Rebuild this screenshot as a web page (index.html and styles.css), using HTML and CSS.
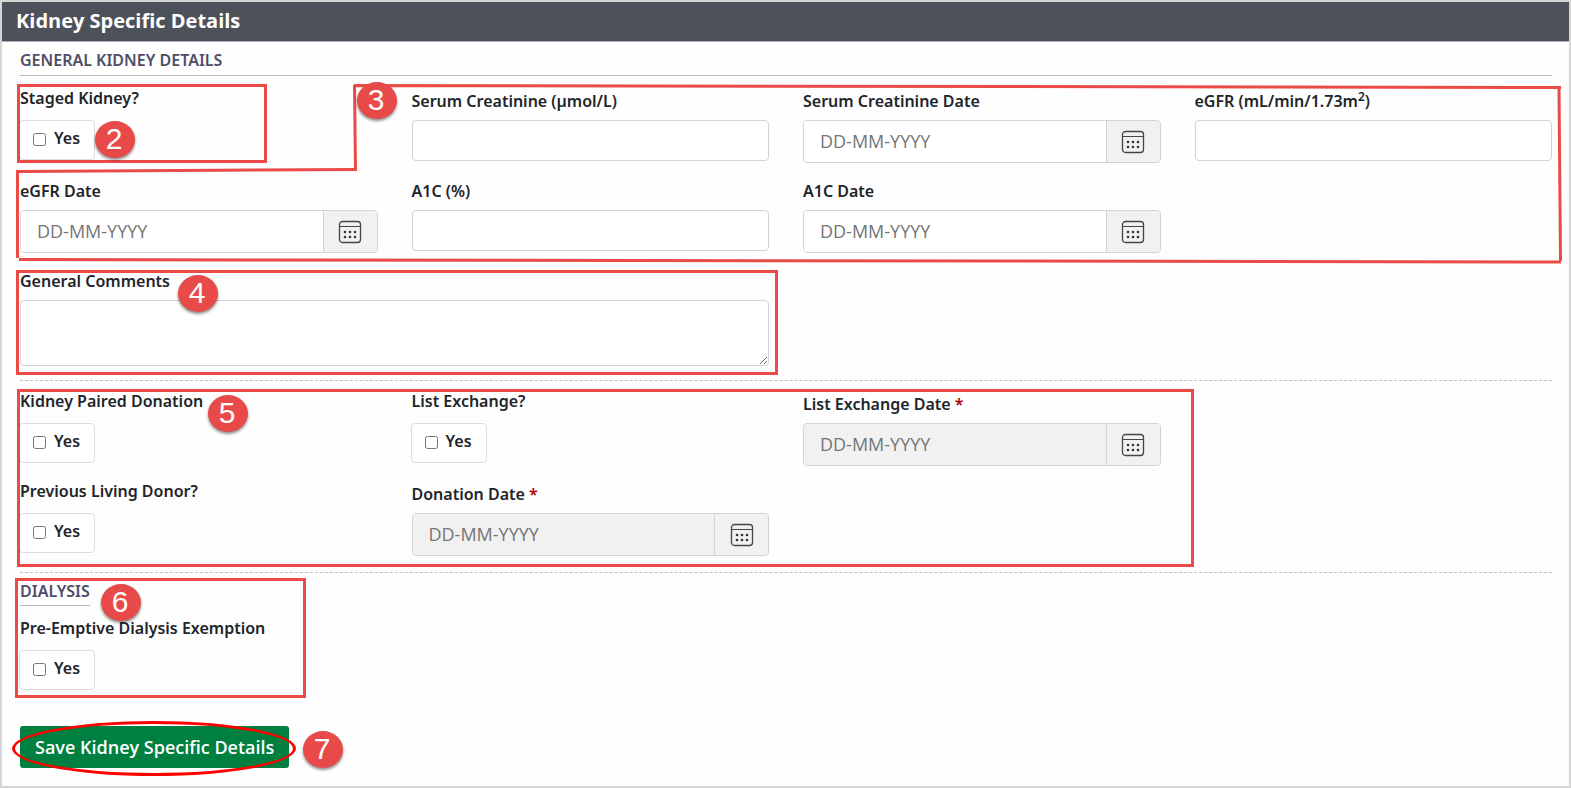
FILE: index.html
```html
<!DOCTYPE html>
<html lang="en">
<head>
<meta charset="utf-8">
<title>Kidney Specific Details</title>
<link rel="stylesheet" href="styles.css">
</head>
<body>
<svg class="sprite" aria-hidden="true">
  <symbol id="calendar" viewBox="0 0 24 24">
    <rect x="1.500" y="1.500" width="21" height="21" rx="3" fill="none" stroke="#444" stroke-width="1.300"/>
    <path d="M1.500 6.500h21" stroke="#444" stroke-width="1.200"/>
    <g fill="#333">
      <circle cx="7" cy="12" r="1.300"/><circle cx="12" cy="12" r="1.300"/><circle cx="17" cy="12" r="1.300"/>
      <circle cx="7" cy="17" r="1.300"/><circle cx="12" cy="17" r="1.300"/><circle cx="17" cy="17" r="1.300"/>
    </g>
  </symbol>
</svg>
<form class="panel">
  <h1 class="panel-title">Kidney Specific Details</h1>
  <div class="panel-body">
    <h2 class="section-title">General Kidney Details</h2>

    <section class="grid general">
      <div class="field check-field">
        <span class="label" id="staged-label">Staged Kidney?</span>
        <label class="check"><input type="checkbox" aria-describedby="staged-label">Yes</label>
        <span class="frame frame-2"></span>
        <span class="badge badge-2">2</span>
      </div>
      <div class="field">
        <label class="label" for="creatinine">Serum Creatinine (µmol/L)</label>
        <input class="text" id="creatinine" type="text">
      </div>
      <div class="field">
        <label class="label" for="creatinine-date">Serum Creatinine Date</label>
        <div class="date"><input id="creatinine-date" type="text" placeholder="DD-MM-YYYY"><button type="button" aria-label="Pick date"><svg class="icon"><use href="#calendar"/></svg></button></div>
      </div>
      <div class="field">
        <label class="label" for="egfr">eGFR (mL/min/1.73m<sup>2</sup>)</label>
        <input class="text" id="egfr" type="text">
      </div>
      <div class="field">
        <label class="label" for="egfr-date">eGFR Date</label>
        <div class="date"><input id="egfr-date" type="text" placeholder="DD-MM-YYYY"><button type="button" aria-label="Pick date"><svg class="icon"><use href="#calendar"/></svg></button></div>
      </div>
      <div class="field">
        <label class="label" for="a1c">A1C (%)</label>
        <input class="text" id="a1c" type="text">
      </div>
      <div class="field">
        <label class="label" for="a1c-date">A1C Date</label>
        <div class="date"><input id="a1c-date" type="text" placeholder="DD-MM-YYYY"><button type="button" aria-label="Pick date"><svg class="icon"><use href="#calendar"/></svg></button></div>
      </div>
      <svg class="outline" viewBox="0 0 1548 180" preserveAspectRatio="none" aria-hidden="true">
        <path d="M338 2.500 1545 4.500M1543 5 1544.500 178M1545 179 3 176.500M1.500 87V175M2 88.500 341 86.500M339.500 88 338.500 2"/>
      </svg>
      <span class="badge badge-3">3</span>
    </section>

    <section class="grid comments">
      <div class="field wide">
        <label class="label" for="comments">General Comments</label>
        <textarea id="comments"></textarea>
        <span class="frame frame-4"></span>
        <span class="badge badge-4">4</span>
      </div>
    </section>

    <section class="grid donation">
      <div class="field check-field">
        <span class="label" id="paired-label">Kidney Paired Donation</span>
        <label class="check"><input type="checkbox" aria-describedby="paired-label">Yes</label>
      </div>
      <div class="field check-field">
        <span class="label" id="exchange-label">List Exchange?</span>
        <label class="check"><input type="checkbox" aria-describedby="exchange-label">Yes</label>
      </div>
      <div class="field">
        <label class="label" for="exchange-date">List Exchange Date <span class="required">*</span></label>
        <div class="date"><input id="exchange-date" type="text" placeholder="DD-MM-YYYY" disabled><button type="button" aria-label="Pick date" disabled><svg class="icon"><use href="#calendar"/></svg></button></div>
      </div>
      <div class="field check-field first">
        <span class="label" id="donor-label">Previous Living Donor?</span>
        <label class="check"><input type="checkbox" aria-describedby="donor-label">Yes</label>
      </div>
      <div class="field">
        <label class="label" for="donation-date">Donation Date <span class="required">*</span></label>
        <div class="date"><input id="donation-date" type="text" placeholder="DD-MM-YYYY" disabled><button type="button" aria-label="Pick date" disabled><svg class="icon"><use href="#calendar"/></svg></button></div>
      </div>
      <span class="frame frame-5"></span>
      <span class="badge badge-5">5</span>
    </section>

    <section class="dialysis">
      <h2 class="section-title">Dialysis</h2>
      <div class="field check-field">
        <span class="label" id="exemption-label">Pre-Emptive Dialysis Exemption</span>
        <label class="check"><input type="checkbox" aria-describedby="exemption-label">Yes</label>
      </div>
      <span class="frame frame-6"></span>
      <span class="badge badge-6">6</span>
    </section>

    <div class="actions">
      <button class="save" type="submit">Save Kidney Specific Details</button>
      <span class="ring"></span>
      <span class="badge badge-7">7</span>
    </div>
  </div>
</form>
</body>
</html>
```
FILE: styles.css
```css
* { box-sizing: border-box; }

body {
  margin: 0;
  background: #fff;
  color: #212529;
  font: 600 16px/24px "Noto Sans", "Open Sans", sans-serif;
}

.sprite { position: absolute; width: 0; height: 0; }

.panel {
  min-height: 100vh;
  border: 2px solid #d6d6d6;
  background: #fefefe;
}

.panel-title {
  margin: 0;
  padding: 4px 14px 5px;
  border-bottom: 1px solid #adb3ba;
  background: #4d5159;
  color: #fff;
  font: 700 20px/30px "Open Sans", "Noto Sans", sans-serif;
}

.panel-body { padding: 6px 17px 18px 18px; }

.section-title {
  margin: 0;
  padding-bottom: 3px;
  border-bottom: 1px solid #b5bac1;
  color: #4f4d68;
  font-size: 16px;
  font-weight: 600;
  text-transform: uppercase;
}

.grid {
  position: relative;
  display: grid;
  grid-template-columns: repeat(4, minmax(0, 1fr));
  gap: 13px 34px;
}

.general { margin-top: 10px; }
.comments { margin-top: 13px; padding-bottom: 14px; }

.donation {
  padding: 8px 0 16px;
  border: dashed #bbc0c5;
  border-width: 1px 0;
}

.field {
  position: relative;
  display: flex;
  flex-direction: column;
  align-items: stretch;
  gap: 7px;
  padding-top: 3px;
  min-width: 0;
}

.check-field { align-items: flex-start; gap: 10px; padding-top: 0; }
.first { grid-column: 1; }
.wide { grid-column: span 2; }

.label { display: block; height: 24px; white-space: nowrap; }
.label sup { font-size: 12px; line-height: 0; vertical-align: super; }
.required { color: #b30000; }

.text, .date, textarea {
  width: 100%;
  border: 1px solid #ced4da;
  border-radius: 4px;
  background: #fff;
  font: inherit;
}

.text { height: 41px; padding: 0 16px; }

textarea { display: block; height: 66px; padding: 8px 16px; resize: vertical; }

.date { display: flex; height: 43px; overflow: hidden; }

.date input {
  flex: 1;
  min-width: 0;
  padding: 0 16px 2px;
  border: 0;
  background: #fff;
  color: #212529;
  font: 400 18px/24px "Open Sans", "Noto Sans", sans-serif;
}

.date input:disabled { background: #f1f1f1; }
.date input::placeholder { color: #757575; opacity: 1; }

.date button {
  display: grid;
  place-items: center;
  width: 54px;
  padding: 0;
  border: 0;
  border-left: 1px solid #ced4da;
  background: #f1f1f1;
}

.icon { width: 24px; height: 24px; }

.check {
  display: flex;
  align-items: center;
  gap: 8px;
  height: 40px;
  margin-left: -1px;
  padding: 0 14px 4px 13px;
  border: 1px solid #dcdcdc;
  border-radius: 4px;
  background: #fff;
}

.check input { width: 13px; height: 13px; margin: 3px 0 0; }

.dialysis { position: relative; margin-top: 6px; }
.dialysis .section-title { display: table; padding: 0 0 2px; margin-bottom: 10px; }

.actions { position: relative; margin-top: 36px; }

.save {
  height: 42px;
  padding: 0 15px;
  border: 0;
  border-radius: 3px;
  background: #008040;
  color: #fff;
  font: 600 18px/24px "Open Sans", "Noto Sans", sans-serif;
}

/* Numbered callouts drawn over the form */
.frame, .outline, .badge, .ring { position: absolute; pointer-events: none; }

.frame { border: 3px solid #eb4b46; }
.frame-2 { left: -3px; top: -2px; width: 250px; height: 79px; }
.frame-4 { inset: 4px -9px -9px -4px; }
.frame-5 { inset: 8px 358px 5px -3px; }
.frame-6 { left: -5px; top: -1px; width: 291px; height: 120px; }

.outline { left: -4px; top: -3px; width: calc(100% + 16px); height: 180px; overflow: visible; }
.outline path { fill: none; stroke: #eb4b46; stroke-width: 3px; vector-effect: non-scaling-stroke; }

.ring {
  left: -8px;
  top: -5px;
  width: 284px;
  height: 55px;
  border: 3px solid #f00;
  border-radius: 50%;
}

.badge {
  width: 40px;
  height: 37px;
  padding-right: 2px;
  border-radius: 50%;
  background: #e84a49;
  box-shadow: 0 2px 3px rgba(0, 0, 0, .45);
  color: #fff;
  font: 400 30px/35px "Liberation Sans", Arial, sans-serif;
  text-align: center;
}
.badge-2 { left: 75px; top: 35px; }
.badge-3 { left: 337px; top: -4px; }
.badge-4 { left: 158px; top: 9px; }
.badge-5 { left: 188px; top: 14px; }
.badge-6 { left: 81px; top: 5px; }
.badge-7 { left: 283px; top: 5px; }
```
